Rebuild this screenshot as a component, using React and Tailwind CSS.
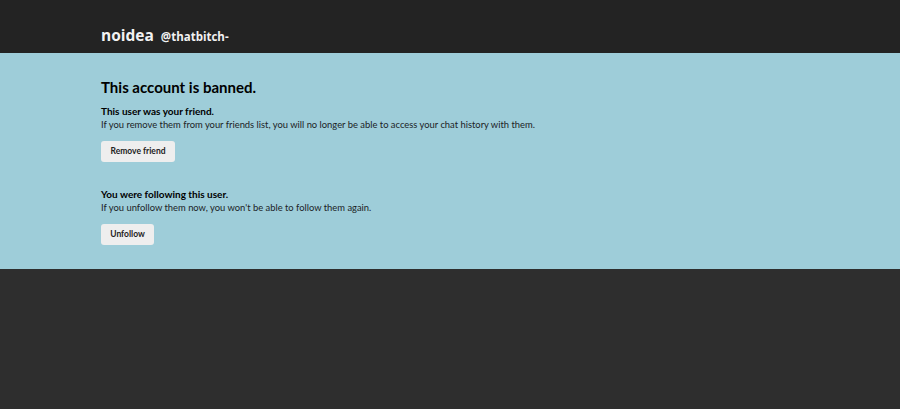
export default function App() {
  return (
    <div className="min-h-[409px] bg-[#2e2e2e]" style={{ fontFamily: 'Lato, "Open Sans", sans-serif' }}>
      <header className="h-[53px] bg-[#232323] flex items-center pt-[18px] px-[101px]">
        <div className="flex items-baseline gap-[7px] text-[#f2f2f2] font-['Open_Sans',sans-serif] font-bold">
          <span className="text-[15.5px] leading-none">noidea</span>
          <span className="text-[11.5px] leading-none">@thatbitch-</span>
        </div>
      </header>

      <main className="bg-[#9ecdd9] px-[101px] pt-[24px] pb-[24px] text-black">
        <h1 className="text-[15px] font-bold leading-[20px]">This account is banned.</h1>

        <section className="mt-[7px]">
          <h2 className="text-[10px] font-bold leading-[14px]">This user was your friend.</h2>
          <p className="text-[9.4px] text-[#1c2326] leading-[14px]">
            If you remove them from your friends list, you will no longer be able to access your chat history with them.
          </p>
          <button className="mt-[9px] h-[21px] w-[74px] rounded-[3px] bg-[#eeeeee] text-[8.5px] font-bold text-[#222]">
            Remove friend
          </button>
        </section>

        <section className="mt-[25px]">
          <h2 className="text-[10px] font-bold leading-[14px]">You were following this user.</h2>
          <p className="text-[9.4px] text-[#1c2326] leading-[14px]">
            If you unfollow them now, you won't be able to follow them again.
          </p>
          <button className="mt-[9px] h-[21px] w-[53px] rounded-[3px] bg-[#eeeeee] text-[8.5px] font-bold text-[#222]">
            Unfollow
          </button>
        </section>
      </main>
    </div>
  )
}
